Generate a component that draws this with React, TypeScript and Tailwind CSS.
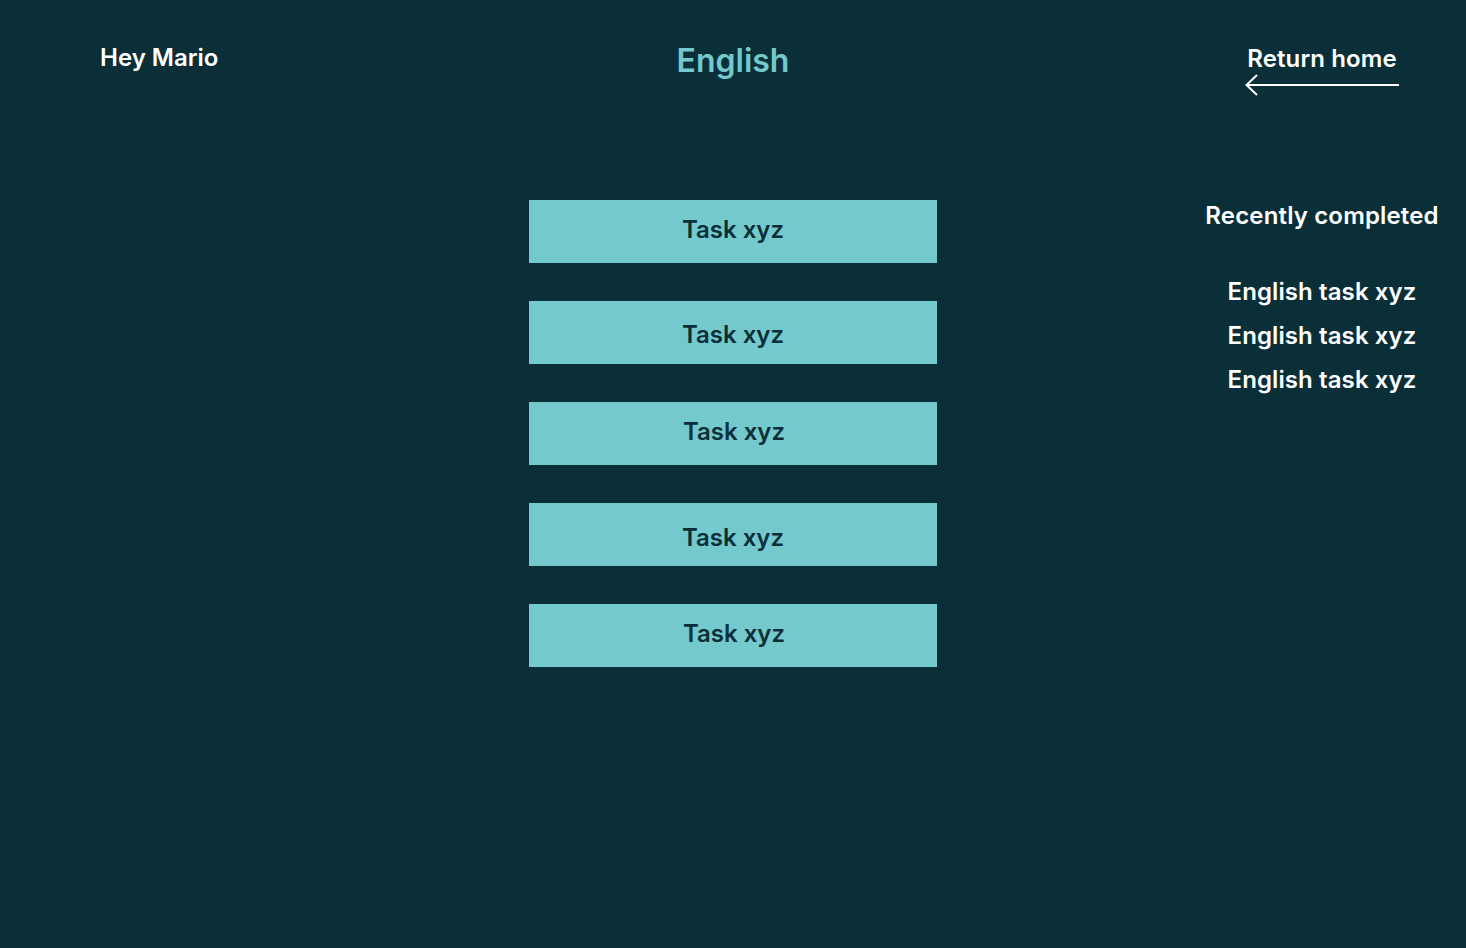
const tasks = [
  { id: 1, label: 'Task xyz', nudge: 'pb-[3px]' },
  { id: 2, label: 'Task xyz', nudge: 'pt-[5px]' },
  { id: 3, label: 'Task xyz', nudge: 'pb-[3px] pl-[2px]' },
  { id: 4, label: 'Task xyz', nudge: 'pt-[7px]' },
  { id: 5, label: 'Task xyz', nudge: 'pb-[3px] pl-[2px]' },
];

const recent = ['English task xyz', 'English task xyz', 'English task xyz'];

export default function App() {
  return (
    <div className="min-h-screen w-full bg-[#0a2f38] font-['Inter',sans-serif] font-semibold grid grid-cols-[1fr_408px_1fr]">
      {/* Greeting */}
      <div className="pl-[100px] pt-[46px]">
        <p className="text-[24px] leading-none text-white">Hey Mario</p>
      </div>

      {/* Subject + tasks */}
      <div className="flex flex-col items-center pt-[45px]">
        <h1 className="text-[32px] leading-none text-[#73c9cc]">English</h1>
        <div className="mt-[123px] w-full flex flex-col gap-[38px]">
          {tasks.map((task) => (
            <button
              key={task.id}
              className={`h-[63px] w-full bg-[#73c9cc] flex items-center justify-center text-[24px] leading-none text-[#0a2f38] ${task.nudge}`}
            >
              {task.label}
            </button>
          ))}
        </div>
      </div>

      {/* Right column */}
      <div className="flex justify-end">
        <div className="w-[288px] flex flex-col items-center pt-[47px]">
          <a className="flex flex-col items-center text-white cursor-pointer">
            <span className="text-[24px] leading-none tracking-[0.1px]">Return home</span>
            <svg width="154" height="22" viewBox="0 0 154 22" fill="none" className="mt-[3px]">
              <line x1="1" y1="11" x2="154" y2="11" stroke="white" strokeWidth="2" />
              <polyline points="12,1 1.5,11 12,21" stroke="white" strokeWidth="2" fill="none" />
            </svg>
          </a>

          <h2 className="mt-[108px] text-[24px] leading-none text-white tracking-[0.15px]">Recently completed</h2>
          <ul className="mt-[42px] flex flex-col items-center">
            {recent.map((item, i) => (
              <li key={i} className="text-[24px] leading-[44px] text-white tracking-[0.1px]">
                {item}
              </li>
            ))}
          </ul>
        </div>
      </div>
    </div>
  );
}
